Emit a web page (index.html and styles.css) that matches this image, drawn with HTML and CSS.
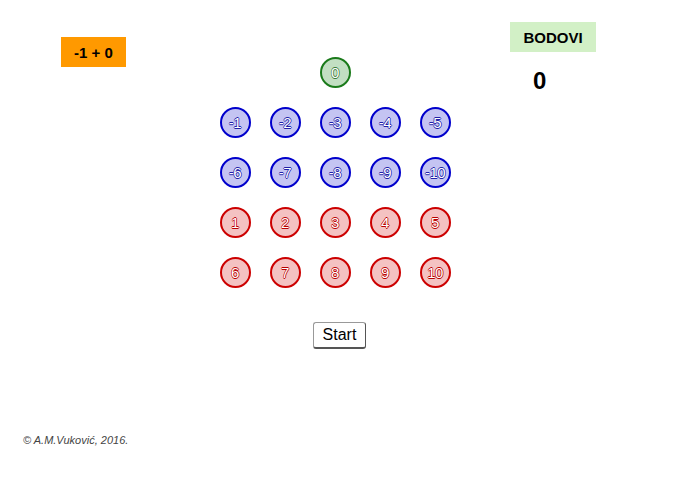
FILE: index.html
```html
<!DOCTYPE html>
<html lang="hr">
<head>
  <meta charset="UTF-8">
  <meta name="viewport" content="width=device-width, initial-scale=1.0">
  <title>Zbrajanje cijelih brojeva</title>
  <link rel="stylesheet" href="styles.css">
</head>
<body>
  <div class="app">
    <div class="main">
      <div class="left">
        <div class="zadatak">-1 + 0</div>
      </div>
      <div class="ploca">
        <div class="krug zeleni nula">0</div>
        <div class="krug plavi">-1</div>
        <div class="krug plavi">-2</div>
        <div class="krug plavi">-3</div>
        <div class="krug plavi">-4</div>
        <div class="krug plavi">-5</div>
        <div class="krug plavi">-6</div>
        <div class="krug plavi">-7</div>
        <div class="krug plavi">-8</div>
        <div class="krug plavi">-9</div>
        <div class="krug plavi">-10</div>
        <div class="krug crveni">1</div>
        <div class="krug crveni">2</div>
        <div class="krug crveni">3</div>
        <div class="krug crveni">4</div>
        <div class="krug crveni">5</div>
        <div class="krug crveni">6</div>
        <div class="krug crveni">7</div>
        <div class="krug crveni">8</div>
        <div class="krug crveni">9</div>
        <div class="krug crveni">10</div>
        <button class="start">Start</button>
      </div>
      <div class="right">
        <div class="bodovi">BODOVI</div>
        <div class="rezultat">0</div>
      </div>
    </div>
    <footer>&copy; A.M.Vuković, 2016.</footer>
  </div>
</body>
</html>
```

FILE: styles.css
```css
:root {
  --narancasta: #ff9900;
  --svijetlo-zelena: #d2f0c6;
  --plava: #0000cc;
  --plava-pozadina: #c4c4f2;
  --crvena: #cc0000;
  --crvena-pozadina: #f4c2c2;
  --zelena: #006600;
  --zelena-pozadina: #c2dfc2;
}
* {
  margin: 0;
  padding: 0;
  box-sizing: border-box;
}
body {
  font-family: 'Liberation Sans', Arial, sans-serif;
  background-color: #ffffff;
  color: #000000;
}
.app {
  width: 677px;
  height: 478px;
  display: flex;
  flex-direction: column;
}
.main {
  display: flex;
  height: 434px;
}
.left {
  width: 210px;
  padding: 37px 0 0 61px;
}
.zadatak {
  width: 65px;
  height: 30px;
  background-color: var(--narancasta);
  font-weight: bold;
  font-size: 15px;
  display: flex;
  align-items: center;
  justify-content: center;
}
.ploca {
  width: 250px;
  padding-top: 47px;
  display: grid;
  grid-template-columns: repeat(5, 50px);
  grid-auto-rows: 50px;
  align-content: start;
}
.krug {
  width: 31px;
  height: 31px;
  border-radius: 50%;
  border: 2px solid;
  justify-self: center;
  align-self: center;
  display: flex;
  align-items: center;
  justify-content: center;
  font-size: 15px;
  color: #ffffff;
  letter-spacing: -0.5px;
}
.nula {
  grid-column: 1 / -1;
}
.plavi {
  background-color: var(--plava-pozadina);
  border-color: var(--plava);
  text-shadow: 0.7px 0 #2020a8, -0.7px 0 #2020a8, 0 0.7px #2020a8, 0 -0.7px #2020a8;
}
.crveni {
  background-color: var(--crvena-pozadina);
  border-color: var(--crvena);
  text-shadow: 0.7px 0 #b80000, -0.7px 0 #b80000, 0 0.7px #b80000, 0 -0.7px #b80000;
}
.zeleni {
  background-color: var(--zelena-pozadina);
  border-color: #1a7a1a;
  text-shadow: 0.6px 0 #3a7a3a, -0.6px 0 #3a7a3a, 0 0.6px #3a7a3a, 0 -0.6px #3a7a3a;
}
.start {
  grid-column: 1 / -1;
  justify-self: start;
  margin: 25px 0 0 103px;
  width: 53px;
  height: 27px;
  font-family: 'Liberation Sans', Arial, sans-serif;
  font-size: 16px;
  background: #ffffff;
  border: 1px solid #999999;
  border-right-color: #555555;
  border-bottom: 2px solid #555555;
  border-radius: 3px;
  color: #000000;
}
.right {
  padding: 22px 0 0 50px;
}
.bodovi {
  width: 86px;
  height: 30px;
  background-color: var(--svijetlo-zelena);
  font-weight: bold;
  font-size: 15px;
  display: flex;
  align-items: center;
  justify-content: center;
}
.rezultat {
  padding: 15px 0 0 23px;
  font-weight: bold;
  font-size: 24px;
}
footer {
  padding-left: 23px;
  font-size: 11px;
  font-style: italic;
  color: #444444;
}
```
